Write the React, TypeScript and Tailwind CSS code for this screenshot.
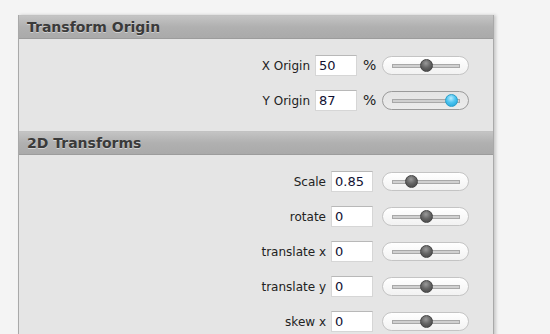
import React from 'react';

interface Control {
  label: string;
  value: string;
  pct: number;
  unit?: string;
  active?: boolean;
}

const originRows: Control[] = [
  { label: 'X Origin', value: '50', pct: 0.5, unit: '%' },
  { label: 'Y Origin', value: '87', pct: 0.87, unit: '%', active: true },
];

const transformRows: Control[] = [
  { label: 'Scale', value: '0.85', pct: 0.28 },
  { label: 'rotate', value: '0', pct: 0.5 },
  { label: 'translate x', value: '0', pct: 0.5 },
  { label: 'translate y', value: '0', pct: 0.5 },
  { label: 'skew x', value: '0', pct: 0.5 },
];

function Slider({ pct, active }: { pct: number; active?: boolean }) {
  return (
    <div
      className={
        'relative h-[19px] w-[87px] shrink-0 rounded-full border ' +
        (active
          ? 'border-[#9a9a9a] bg-gradient-to-b from-[#e4e4e4] to-[#ececec]'
          : 'border-[#c4c4c4] bg-gradient-to-b from-[#ffffff] to-[#f2f2f2]')
      }
    >
      <div className="absolute left-[9px] top-[7px] h-[4px] w-[68px] border border-[#a8a8a8] bg-[#d0d0d0]" />
      <div
        className={
          'absolute top-[2px] h-[13px] w-[13px] rounded-full border ' +
          (active
            ? 'border-[#2a9fc9] bg-[radial-gradient(circle_at_45%_30%,#b8ecff_0%,#4cc4f0_45%,#1e9fd6_100%)]'
            : 'border-[#444] bg-[radial-gradient(circle_at_45%_30%,#9a9a9a_0%,#666_45%,#3e3e3e_100%)]')
        }
        style={{ left: 9 + pct * 68 - 6.5 }}
      />
    </div>
  );
}

function Row({ c }: { c: Control }) {
  return (
    <div className="flex h-[21px] items-center justify-end">
      <span className="mr-[5px] text-[12px] text-[#222]">{c.label}</span>
      <input
        readOnly
        value={c.value}
        className="h-[21px] w-[42px] border border-[#d6d6d6] border-t-[#b8b8b8] bg-white px-[3px] text-[13px] text-[#111133] outline-none"
      />
      {c.unit ? (
        <span className="ml-[6px] mr-[7px] w-[12px] text-[14px] text-[#222]">{c.unit}</span>
      ) : (
        <span className="w-[9px]" />
      )}
      <Slider pct={c.pct} active={c.active} />
    </div>
  );
}

function Section({ title, rows }: { title: string; rows: Control[] }) {
  return (
    <div>
      <div className="flex h-[24px] items-center border-y border-[#9c9c9c] border-t-[#c2c2c2] bg-gradient-to-b from-[#c4c4c4] via-[#b0b0b0] to-[#aaaaaa] pl-[8px]">
        <h2 className="text-[14px] font-bold text-[#3a3a3a] [text-shadow:0_1px_0_rgba(255,255,255,0.45)]">
          {title}
        </h2>
      </div>
      <div className="flex flex-col gap-[14px] pb-[20px] pr-[24px] pt-[16px]">
        {rows.map(r => (
          <Row key={r.label} c={r} />
        ))}
      </div>
    </div>
  );
}

export default function App() {
  return (
    <div className="h-[334px] w-[550px] overflow-hidden bg-[#f4f4f4] pl-[18px] pt-[15px] font-['DejaVu_Sans',sans-serif]">
      <div className="w-[476px] border-x border-[#a9a9a9] bg-[#e5e5e5] shadow-[2px_0_3px_rgba(0,0,0,0.18)]">
        <Section title="Transform Origin" rows={originRows} />
        <Section title="2D Transforms" rows={transformRows} />
      </div>
    </div>
  );
}
